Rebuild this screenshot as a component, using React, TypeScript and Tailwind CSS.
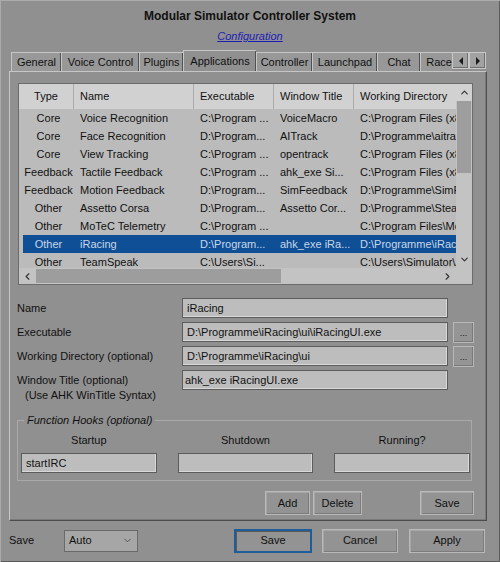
import React from 'react';
import { ChevronUp, ChevronDown, ChevronLeft, ChevronRight } from 'lucide-react';

type App = {
  type: string;
  name: string;
  exe: string;
  title: string;
  dir: string;
};

const apps: App[] = [
  { type: 'Core', name: 'Voice Recognition', exe: 'C:\\Program ...', title: 'VoiceMacro', dir: 'C:\\Program Files (x86)\\VoiceMacro' },
  { type: 'Core', name: 'Face Recognition', exe: 'D:\\Program...', title: 'AITrack', dir: 'D:\\Programme\\aitrack' },
  { type: 'Core', name: 'View Tracking', exe: 'C:\\Program ...', title: 'opentrack', dir: 'C:\\Program Files (x86)\\opentrack' },
  { type: 'Feedback', name: 'Tactile Feedback', exe: 'C:\\Program ...', title: 'ahk_exe Si...', dir: 'C:\\Program Files (x86)\\SimHub' },
  { type: 'Feedback', name: 'Motion Feedback', exe: 'D:\\Program...', title: 'SimFeedback', dir: 'D:\\Programme\\SimFeedback' },
  { type: 'Other', name: 'Assetto Corsa', exe: 'D:\\Program...', title: 'Assetto Cor...', dir: 'D:\\Programme\\Steam' },
  { type: 'Other', name: 'MoTeC Telemetry', exe: 'C:\\Program ...', title: '', dir: 'C:\\Program Files\\MoTeC' },
  { type: 'Other', name: 'iRacing', exe: 'D:\\Program...', title: 'ahk_exe iRa...', dir: 'D:\\Programme\\iRacing\\ui' },
  { type: 'Other', name: 'TeamSpeak', exe: 'C:\\Users\\Si...', title: '', dir: 'C:\\Users\\Simulator\\AppData' },
];

const tabs = [
  { label: 'General', w: 'w-[50px]' },
  { label: 'Voice Control', w: 'w-[78px]' },
  { label: 'Plugins', w: 'w-[44px]' },
  { label: 'Applications', w: 'w-[73px]', active: true },
  { label: 'Controller', w: 'w-[56px]' },
  { label: 'Launchpad', w: 'w-[65px]' },
  { label: 'Chat', w: 'w-[43px]' },
  { label: 'Race Settings', w: 'w-[80px]' },
];

const Input = ({ value = '', className = '' }: { value?: string; className?: string }) => (
  <div
    className={`h-[20px] bg-[#bdbdbd] border border-[#5c5c5c] shadow-[inset_-1px_-1px_0_#d8d8d8] px-[4px] leading-[18px] whitespace-nowrap overflow-hidden ${className}`}
  >
    {value}
  </div>
);

const Button = ({ label, className = '' }: { label: string; className?: string }) => (
  <div
    className={`h-[24px] flex items-center justify-center bg-[#939393] border border-[#b9b9b9] shadow-[inset_1px_1px_0_#a6a6a6,inset_-1px_-1px_0_#7c7c7c] ${className}`}
  >
    {label}
  </div>
);

const FieldRow = ({ label, value, browse }: { label: string; value: string; browse?: boolean }) => (
  <div className="flex items-center h-[20px]">
    <div className="w-[172px] pl-[7px]">{label}</div>
    <Input value={value} className="w-[266px]" />
    {browse && (
      <div className="ml-[5px] w-[21px] h-[21px] flex items-end justify-center pb-[4px] text-[9px] leading-none bg-[#959595] border border-[#b8b8b8] shadow-[inset_-1px_-1px_0_#7a7a7a]">
        ...
      </div>
    )}
  </div>
);

const Triangle = ({ dir }: { dir: 'left' | 'right' }) => (
  <svg width="6" height="8" viewBox="0 0 6 8">
    <path d={dir === 'left' ? 'M5 0 L1 4 L5 8 Z' : 'M1 0 L5 4 L1 8 Z'} fill="#1a1a1a" />
  </svg>
);

const AppTable = () => (
  <div className="ml-[8px] mt-[11px] w-[455px] h-[202px] border border-[#6c6c6c] bg-[#bbbbbb] flex flex-col overflow-hidden">
    <div className="flex flex-1 min-h-0">
      <div className="flex-1 overflow-hidden">
        {/* header */}
        <div className="flex h-[25px] bg-[#d1d1d1] whitespace-nowrap">
          <div className="w-[55px] border-r border-[#ababab] flex items-center justify-center">Type</div>
          <div className="w-[120px] border-r border-[#ababab] flex items-center pl-[6px]">Name</div>
          <div className="w-[80px] border-r border-[#ababab] flex items-center pl-[6px]">Executable</div>
          <div className="w-[80px] border-r border-[#ababab] flex items-center pl-[6px]">Window Title</div>
          <div className="flex-1 flex items-center pl-[6px]">Working Directory</div>
        </div>
        {apps.map((a) => {
          const sel = a.name === 'iRacing';
          return (
            <div key={a.name} className="pl-[4px]">
              <div
                className={`flex h-[18px] items-center whitespace-nowrap ${
                  sel ? 'bg-[#0f4f96] text-[#c9d6e6]' : ''
                }`}
              >
                <div className="w-[51px] shrink-0 text-center">{a.type}</div>
                <div className="w-[120px] shrink-0 pl-[6px]">{a.name}</div>
                <div className="w-[80px] shrink-0 pl-[6px]">{a.exe}</div>
                <div className="w-[80px] shrink-0 pl-[6px]">{a.title}</div>
                <div className="flex-1 pl-[6px] overflow-hidden">{a.dir}</div>
              </div>
            </div>
          );
        })}
      </div>
      {/* vertical scrollbar */}
      <div className="w-[16px] flex flex-col bg-[#c3c3c3]">
        <div className="h-[17px] flex items-center justify-center bg-[#d1d1d1]">
          <ChevronUp size={11} strokeWidth={2.5} color="#333" />
        </div>
        <div className="h-[72px] mx-[1px] bg-[#9d9d9d]" />
        <div className="flex-1" />
        <div className="h-[14px] flex items-start justify-center">
          <ChevronDown size={11} strokeWidth={2.5} color="#333" />
        </div>
      </div>
    </div>
    {/* horizontal scrollbar */}
    <div className="h-[16px] flex bg-[#c3c3c3]">
      <div className="w-[17px] flex items-center justify-center">
        <ChevronLeft size={11} strokeWidth={2.5} color="#333" />
      </div>
      <div className="w-[245px] my-[1px] bg-[#9d9d9d]" />
      <div className="flex-1" />
      <div className="w-[17px] flex items-center justify-center">
        <ChevronRight size={11} strokeWidth={2.5} color="#333" />
      </div>
      <div className="w-[16px]" />
    </div>
  </div>
);

export default function App() {
  return (
    <div
      className="w-[500px] h-[562px] bg-[#909090] text-[#111] text-[11px] overflow-hidden shadow-[inset_1px_1px_0_#ababab,inset_-1px_-1px_0_#5a5a5a]"
      style={{ fontFamily: '"Liberation Sans", Arial, sans-serif' }}
    >
      <div className="pt-[8px] text-center text-[12px] font-bold leading-[16px]">
        Modular Simulator Controller System
      </div>
      <div className="mt-[4px] text-center leading-[16px]">
        <span className="italic underline text-[#1d1db4]">Configuration</span>
      </div>

      {/* tabs */}
      <div className="mt-[6px] ml-[11px] flex items-end h-[21px]">
        <div className="flex items-end w-[441px] overflow-hidden">
          {tabs.map((t) => (
            <div
              key={t.label}
              className={`${t.w} shrink-0 flex items-center whitespace-nowrap border-l border-t border-[#c6c6c6] shadow-[inset_-1px_0_0_#505050] ${
                t.active
                  ? 'h-[22px] -mb-px bg-[#909090] justify-center relative z-10'
                  : 'h-[19px] bg-[#989898] justify-center'
              }`}
            >
              {t.label}
            </div>
          ))}
        </div>
        <div className="flex mb-[2px]">
          <div className="w-[17px] h-[17px] flex items-center justify-center bg-[#a2a2a2] border border-[#c8c8c8] shadow-[inset_-1px_-1px_0_#707070]">
            <Triangle dir="left" />
          </div>
          <div className="w-[17px] h-[17px] flex items-center justify-center bg-[#a2a2a2] border border-[#c8c8c8] shadow-[inset_-1px_-1px_0_#707070]">
            <Triangle dir="right" />
          </div>
        </div>
      </div>

      {/* tab panel */}
      <div className="ml-[9px] w-[478px] h-[450px] border border-l-[#c6c6c6] border-t-[#c6c6c6] border-r-[#4c4c4c] border-b-[#4c4c4c] shadow-[inset_-1px_-1px_0_#7a7a7a] flex flex-col">
        <AppTable />

        <div className="mt-[13px] flex flex-col gap-[4px]">
          <FieldRow label="Name" value="iRacing" />
          <FieldRow label="Executable" value="D:\Programme\iRacing\ui\iRacingUI.exe" browse />
          <FieldRow label="Working Directory (optional)" value="D:\Programme\iRacing\ui" browse />
          <div className="flex items-start">
            <div className="w-[172px] pl-[7px] pt-[3px] leading-[14px]">
              <div>Window Title (optional)</div>
              <div className="pl-[8px] mt-[1px]">(Use AHK WinTitle Syntax)</div>
            </div>
            <Input value="ahk_exe iRacingUI.exe" className="w-[266px] !px-[2px]" />
          </div>
        </div>

        {/* function hooks */}
        <div className="relative mt-[18px] ml-[7px] w-[455px] h-[61px] border border-[#a9a9a9]">
          <div className="absolute -top-[8px] left-[6px] px-[3px] italic bg-[#909090] leading-[14px]">
            Function Hooks (optional)
          </div>
          <div className="grid grid-cols-3 gap-x-[21px] pl-[3px] pr-[1px] pt-[12px]">
            <div className="text-center leading-[14px]">Startup</div>
            <div className="text-center leading-[14px]">Shutdown</div>
            <div className="text-center leading-[14px]">Running?</div>
            <Input value="startIRC" className="mt-[6px]" />
            <Input className="mt-[6px]" />
            <Input className="mt-[6px]" />
          </div>
        </div>

        <div className="mt-[10px] flex justify-end pr-[12px]">
          <Button label="Add" className="w-[45px]" />
          <Button label="Delete" className="w-[49px] ml-[3px]" />
          <Button label="Save" className="w-[54px] ml-[58px]" />
        </div>
      </div>

      {/* bottom bar */}
      <div className="mt-[8px] flex items-center h-[23px]">
        <div className="w-[64px] pl-[9px]">Save</div>
        <div className="w-[74px] h-[22px] flex items-center justify-between px-[4px] bg-[#a6a6a6] border border-[#6a6a6a]">
          <span>Auto</span>
          <ChevronDown size={11} strokeWidth={1.5} color="#333" />
        </div>
        <Button
          label="Save"
          className="ml-[96px] w-[78px] h-[23px] !border-2 !border-[#1f5d99] !shadow-[inset_1px_1px_0_#5a5a5a]"
        />
        <Button label="Cancel" className="ml-[10px] w-[76px] h-[23px]" />
        <Button label="Apply" className="ml-[11px] w-[76px] h-[23px]" />
      </div>
    </div>
  );
}
